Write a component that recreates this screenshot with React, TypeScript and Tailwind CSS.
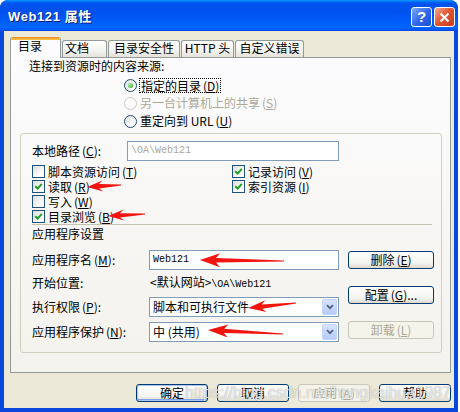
import React from "react";
import clsx from "clsx";

const cjk = "font-['Noto_Sans_CJK_SC','Noto_Sans',sans-serif]";
const mono = "font-['Liberation_Mono','Noto_Sans_CJK_SC',monospace]";

function Key({ k, colon }: { k: string; colon?: boolean }) {
  return (
    <span className="ml-[2px]">
      (<span className="underline underline-offset-[1px]">{k}</span>){colon ? ":" : ""}
    </span>
  );
}

function Radio({ checked, disabled }: { checked?: boolean; disabled?: boolean }) {
  return (
    <span
      className={clsx(
        "flex h-[13px] w-[13px] shrink-0 items-center justify-center rounded-full border",
        disabled
          ? "border-[#CAC8BB] bg-white"
          : "border-[#1C5180] bg-[linear-gradient(135deg,#DCDCD7,#FFFFFF_75%)]"
      )}
    >
      {checked && (
        <span className="h-[5px] w-[5px] rounded-full bg-[radial-gradient(circle_at_35%_35%,#B8F0A0,#21A121)]" />
      )}
    </span>
  );
}

function Check({ checked }: { checked?: boolean }) {
  return (
    <span className="flex h-[13px] w-[13px] shrink-0 items-center justify-center border border-[#1C5180] bg-[linear-gradient(135deg,#DCDCD7,#FFFFFF_75%)]">
      {checked && (
        <svg width="9" height="9" viewBox="0 0 9 9">
          <path d="M1.2 4.2 L3.6 6.6 L7.8 1.8" stroke="#21A121" strokeWidth="2" fill="none" />
        </svg>
      )}
    </span>
  );
}

function Btn({
  children,
  disabled,
  primary,
  wide,
}: {
  children: React.ReactNode;
  disabled?: boolean;
  primary?: boolean;
  wide?: boolean;
}) {
  return (
    <div
      className={clsx(
        "flex h-[18px] items-center justify-center rounded-[3px] border",
        wide ? "w-[86px]" : "w-[72px]",
        disabled
          ? "border-[#C9C7BA] bg-[#F5F4EA] text-[#ACA899]"
          : "border-[#003C74] bg-[linear-gradient(to_bottom,#FFFFFF,#F3F3EF_70%,#DCD8CC)]",
        primary && "shadow-[inset_0_0_0_1px_#A9C4F2,inset_0_-1px_0_1px_#7FA2E6]"
      )}
    >
      {children}
    </div>
  );
}

function Select({ value }: { value: string }) {
  return (
    <div className="flex h-[20px] w-[190px] items-center border border-[#7F9DB9] bg-white pl-[3px] pr-px">
      <span className="flex-1">{value}</span>
      <span className="flex h-[16px] w-[15px] items-center justify-center rounded-[2px] border border-[#C3D3FD] bg-[linear-gradient(to_bottom,#D8E4FD,#B7CBF6)]">
        <svg width="8" height="6" viewBox="0 0 8 6">
          <path d="M1 1.2 L4 4.2 L7 1.2" stroke="#4D6185" strokeWidth="1.8" fill="none" />
        </svg>
      </span>
    </div>
  );
}

type ArrowSpec = { tx: number; ty: number; ex: number; ey: number; head: number; hw: number };

function arrowPoints({ tx, ty, ex, ey, head, hw }: ArrowSpec) {
  const len = Math.hypot(ex - tx, ey - ty);
  const dx = (ex - tx) / len;
  const dy = (ey - ty) / len;
  const nx = -dy;
  const ny = dx;
  const p = (a: number, b: number) => `${(tx + dx * a + nx * b).toFixed(1)},${(ty + dy * a + ny * b).toFixed(1)}`;
  return [
    p(0, 0),
    p(head, hw),
    p(head - 4, 2.2),
    p(len, 0.6),
    p(len, -0.6),
    p(head - 4, -2.2),
    p(head, -hw),
  ].join(" ");
}

const arrows: ArrowSpec[] = [
  { tx: 87, ty: 187, ex: 121, ey: 185, head: 16, hw: 5.5 },
  { tx: 108, ty: 216, ex: 145, ey: 214, head: 16, hw: 5.5 },
  { tx: 200, ty: 260, ex: 284, ey: 261, head: 20, hw: 7 },
  { tx: 248, ty: 308, ex: 296, ey: 303, head: 18, hw: 6 },
  { tx: 208, ty: 330, ex: 283, ey: 334, head: 20, hw: 6.5 },
];

const tabs = [
  { label: "文档", w: "w-[45px]", pad: "pl-[2px]" },
  { label: "目录安全性", w: "w-[72px]", pad: "justify-center" },
  { label: "HTTP 头", w: "w-[53px]", pad: "justify-center" },
  { label: "自定义错误", w: "w-[69px]", pad: "justify-center" },
];

export default function App() {
  return (
    <div className={clsx("relative h-[412px] w-[460px] bg-white text-[12px] leading-[14px] text-black", cjk)}>
      <div className="flex h-[412px] w-[458px] flex-col rounded-t-[8px] bg-[#0A48DD]">
        {/* title bar */}
        <div className="flex h-[31px] shrink-0 items-center justify-between rounded-t-[8px] bg-[linear-gradient(to_bottom,#0997FF_0%,#0053EE_10%,#0050EE_40%,#0066FF_88%,#005BFF_95%,#003DD7_100%)] pl-[8px] pr-[3px]">
          <span className="pt-[2px] font-['Liberation_Sans','Noto_Sans_CJK_SC',sans-serif] text-[13px] font-bold tracking-[0.6px] text-white [text-shadow:1px_1px_0_#0A1E6E]">
            Web121 属性
          </span>
          <div className="flex gap-[2px] pt-[3px]">
            <div className="flex h-[20px] w-[21px] items-center justify-center rounded-[3px] border border-white bg-[linear-gradient(135deg,#7AA8FF,#2F66EA_55%,#1C4FD6)] font-['Liberation_Sans',sans-serif] text-[15px] font-bold text-white">
              ?
            </div>
            <div className="flex h-[20px] w-[21px] items-center justify-center rounded-[3px] border border-white bg-[linear-gradient(135deg,#F4A98E,#E2522F_50%,#C73C1C)]">
              <svg width="11" height="11" viewBox="0 0 11 11">
                <path d="M1.5 1.5 L9.5 9.5 M9.5 1.5 L1.5 9.5" stroke="white" strokeWidth="2.2" />
              </svg>
            </div>
          </div>
        </div>

        {/* body */}
        <div className="mx-[4px] mb-[4px] flex flex-1 flex-col bg-[#ECE9D8] pl-[6px] pr-[3px] pt-[6px]">
          {/* tabs */}
          <div className="flex h-[20px] items-end gap-[1px]">
            <div className="relative z-10 -mb-px flex h-[21px] w-[51px] flex-col overflow-hidden rounded-t-[3px] border-x border-[#919B9C] bg-[#FCFCFE]">
              <div className="h-[3px] shrink-0 bg-[linear-gradient(to_bottom,#E68B2C,#FFC83C)]" />
              <div className="pl-[7px] leading-[12px]">目录</div>
            </div>
            {tabs.map((t) => (
              <div
                key={t.label}
                className={clsx(
                  "flex h-[17px] rounded-t-[3px] border border-b-0 border-[#919B9C] bg-[linear-gradient(to_bottom,#FFFFFF,#F3F3EF_60%,#E4E2D9)]",
                  t.w,
                  t.pad
                )}
              >
                {t.label}
              </div>
            ))}
          </div>

          {/* tab panel */}
          <div className="flex h-[316px] flex-col border border-[#919B9C] bg-[linear-gradient(to_bottom,#FCFCFE,#F4F2EC)]">
            <div className="ml-[18px] mt-px h-[14px]">连接到资源时的内容来源:</div>
            <div className="ml-[113px] mt-[3px] flex flex-col">
              <div className="flex h-[18px] items-center gap-[2px]">
                <Radio checked />
                <span className="border border-dotted border-black px-px leading-[13px]">
                  指定的目录<Key k="D" />
                </span>
              </div>
              <div className="flex h-[18px] items-center gap-[3px] text-[#ACA899]">
                <Radio disabled />
                <span>
                  另一台计算机上的共享<Key k="S" />
                </span>
              </div>
              <div className="flex h-[18px] items-center gap-[3px]">
                <Radio />
                <span>
                  重定向到 URL<Key k="U" />
                </span>
              </div>
            </div>

            {/* group box */}
            <div className="ml-[9px] mt-[3px] flex h-[220px] w-[422px] flex-col rounded-[3px] border border-[#D0D0BF] pl-[11px] pt-[7px]">
              <div className="flex h-[20px] items-center">
                <span className="w-[95px]">
                  本地路径<Key k="C" colon />
                </span>
                <div className={clsx("flex h-[20px] w-[212px] items-center border border-[#7F9DB9] bg-white pl-[3px] text-[10px] text-[#ACA899]", mono)}>
                  \OA\Web121
                </div>
              </div>

              <div className="mt-[3px] grid grid-cols-[200px_1fr]">
                <div className="flex h-[15px] items-center gap-[3px]">
                  <Check />
                  <span>
                    脚本资源访问<Key k="T" />
                  </span>
                </div>
                <div className="flex h-[15px] items-center gap-[3px]">
                  <Check checked />
                  <span>
                    记录访问<Key k="V" />
                  </span>
                </div>
                <div className="flex h-[15px] items-center gap-[3px]">
                  <Check checked />
                  <span>
                    读取<Key k="R" />
                  </span>
                </div>
                <div className="flex h-[15px] items-center gap-[3px]">
                  <Check checked />
                  <span>
                    索引资源<Key k="I" />
                  </span>
                </div>
                <div className="flex h-[15px] items-center gap-[3px]">
                  <Check />
                  <span>
                    写入<Key k="W" />
                  </span>
                </div>
                <div />
                <div className="flex h-[15px] items-center gap-[3px]">
                  <Check checked />
                  <span>
                    目录浏览<Key k="B" />
                  </span>
                </div>
                <div />
              </div>

              <div className="h-px w-[400px] bg-[#C5C2B2]" />
              <div className="mt-[2px] h-[14px]">应用程序设置</div>

              <div className="mt-[9px] flex gap-[9px]">
                <div className="flex w-[307px] flex-col">
                  <div className="flex h-[20px] items-center">
                    <span className="w-[117px]">
                      应用程序名<Key k="M" colon />
                    </span>
                    <div className={clsx("flex h-[20px] w-[190px] items-center border border-[#7F9DB9] bg-white pl-[3px] text-[10px]", mono)}>
                      Web121
                    </div>
                  </div>
                  <div className="mt-[3px] flex h-[20px] items-center">
                    <span className="w-[118px]">开始位置:</span>
                    <span>
                      &lt;默认网站&gt;<span className={clsx("text-[10px]", mono)}>\OA\Web121</span>
                    </span>
                  </div>
                  <div className="mt-[4px] flex h-[20px] items-center">
                    <span className="w-[117px]">
                      执行权限<Key k="P" colon />
                    </span>
                    <Select value="脚本和可执行文件" />
                  </div>
                  <div className="mt-[5px] flex h-[20px] items-center">
                    <span className="w-[117px]">
                      应用程序保护<Key k="N" colon />
                    </span>
                    <Select value="中 (共用)" />
                  </div>
                </div>
                <div className="flex flex-col pt-px">
                  <Btn wide>
                    删除<Key k="E" />
                  </Btn>
                  <div className="mt-[17px]">
                    <Btn wide>
                      配置<Key k="G" />...
                    </Btn>
                  </div>
                  <div className="mt-[17px]">
                    <Btn wide disabled>
                      卸载<Key k="L" />
                    </Btn>
                  </div>
                </div>
              </div>
            </div>
          </div>

          {/* dialog buttons */}
          <div className="mt-[11px] flex justify-end gap-[9px]">
            <Btn primary>确定</Btn>
            <Btn>取消</Btn>
            <Btn disabled>
              应用<Key k="A" />
            </Btn>
            <Btn>帮助</Btn>
          </div>
        </div>
      </div>

      {/* annotation arrows */}
      <svg className="pointer-events-none absolute left-0 top-0" width="460" height="412">
        {arrows.map((a, i) => (
          <polygon key={i} points={arrowPoints(a)} fill="#F2140E" />
        ))}
      </svg>

      {/* watermark */}
      <div className="pointer-events-none absolute left-[185px] top-[384px] font-['Liberation_Sans',sans-serif] text-[16px] leading-[18px] text-white/75 [text-shadow:0_0_1px_rgba(80,80,80,0.6)]">
        https://blog.csdn.net/hongkaihua1987
      </div>
    </div>
  );
}
